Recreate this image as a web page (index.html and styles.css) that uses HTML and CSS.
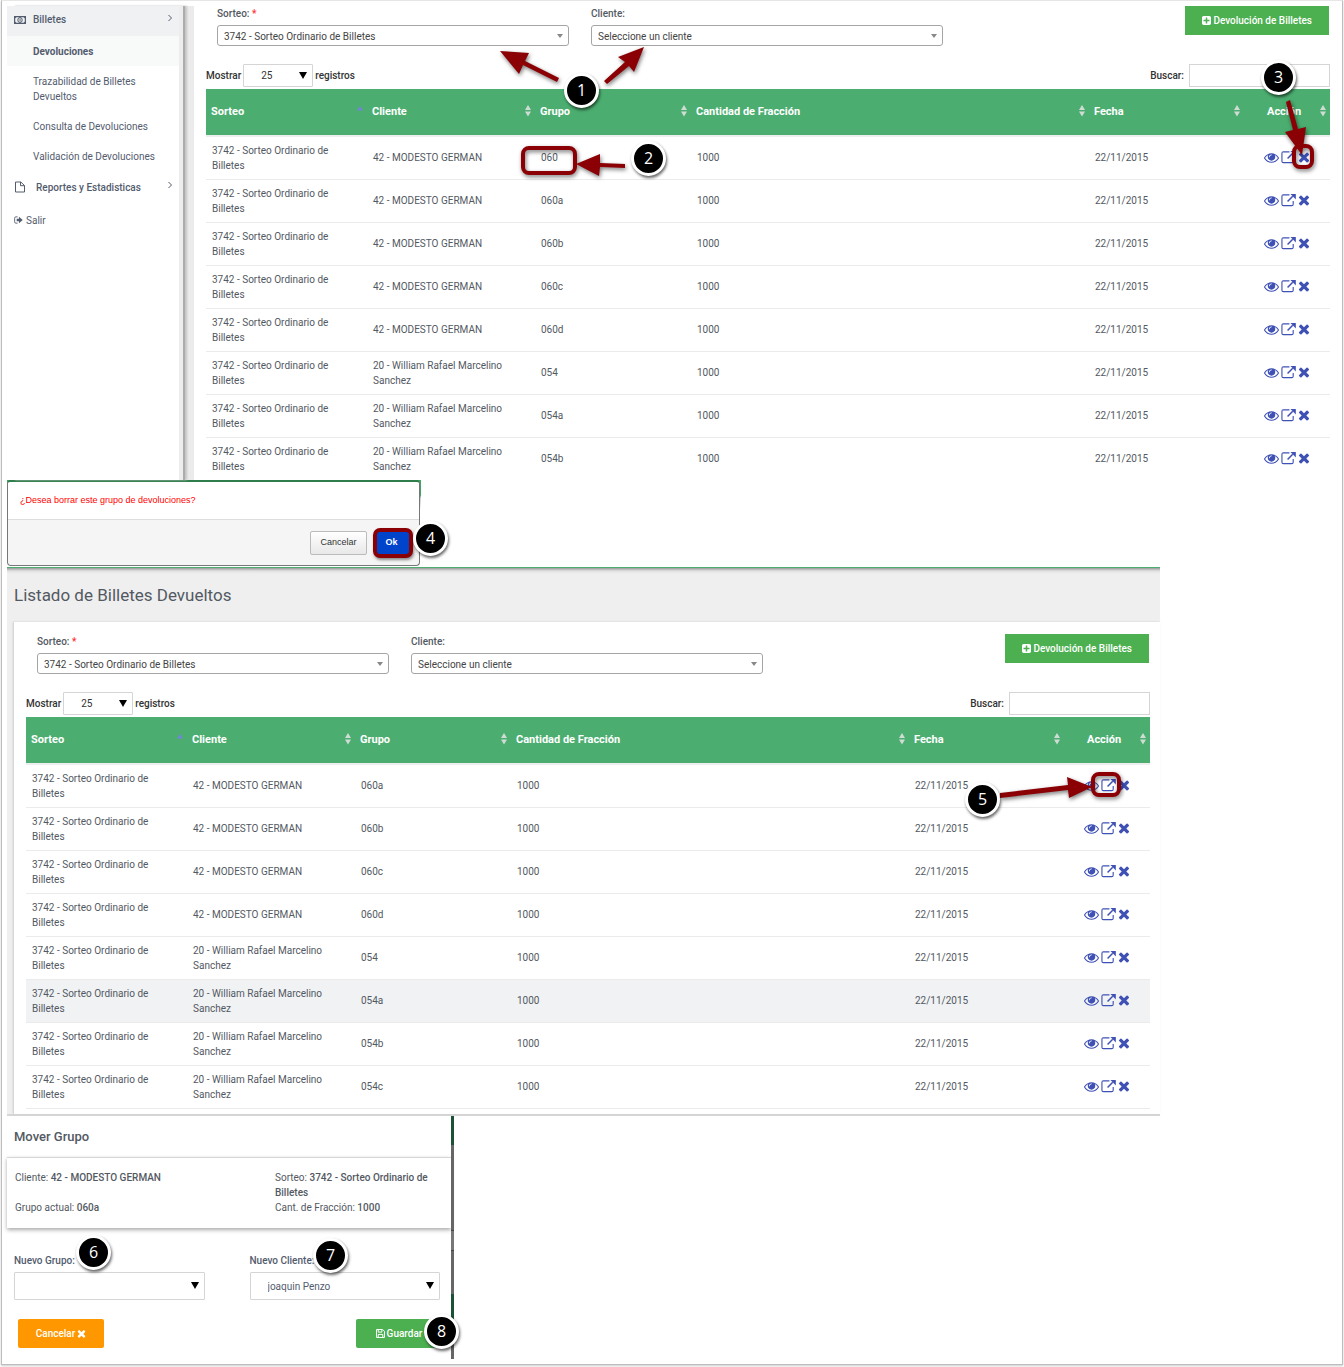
FILE: index.html
```html
<!DOCTYPE html>
<html lang="es">
<head>
<meta charset="utf-8">
<meta name="viewport" content="width=device-width, initial-scale=1">
<title>Listado de Billetes Devueltos</title>
<link rel="stylesheet" href="styles.css">
</head>
<body>
<svg class="symbols" aria-hidden="true">
  <symbol id="eye" viewBox="0 0 1792 1792"><path d="M1664 960q-152-236-381-353q61 104 61 225q0 185-131.5 316.5t-316.5 131.5t-316.5-131.5t-131.5-316.5q0-121 61-225q-229 117-381 353q133 205 333.5 326.5t434.5 121.5t434.5-121.5t333.5-326.5zM944 576q0-20-14-34t-34-14q-125 0-214.5 89.5t-89.5 214.5q0 20 14 34t34 14t34-14t14-34q0-86 61-147t147-61q20 0 34-14t14-34zM1792 960q0 34-20 69q-140 230-376.5 368.5t-499.5 138.5t-499.5-139t-376.5-368q-20-35-20-69t20-69q140-229 376.5-368t499.5-139t499.5 139t376.5 368q20 35 20 69z"/></symbol>
  <symbol id="move" viewBox="0 0 16 16"><path d="M9 2H2.500Q1 2 1 3.500V12Q1 13.500 2.500 13.500H11.500Q13 13.500 13 12V8.500" fill="none" stroke="currentColor" stroke-width="1.200"/><path d="M7 9L12.500 3.500" stroke="currentColor" stroke-width="1.600"/><path d="M10 1H15.800V6.800L13.800 4.800L12 3Z"/></symbol>
  <symbol id="times" viewBox="192 192 1408 1408"><path d="M1490 1322q0 40-28 68l-136 136q-28 28-68 28t-68-28l-294-294-294 294q-28 28-68 28t-68-28l-136-136q-28-28-28-68t28-68l294-294-294-294q-28-28-28-68t28-68l136-136q28-28 68-28t68 28l294 294 294-294q28-28 68-28t68 28l136 136q28 28 28 68t-28 68l-294 294 294 294q28 28 28 68z"/></symbol>
  <symbol id="plus" viewBox="128 128 1536 1536"><path d="M1408 960v-128q0-26-19-45t-45-19h-320v-320q0-26-19-45t-45-19h-128q-26 0-45 19t-19 45v320h-320q-26 0-45 19t-19 45v128q0 26 19 45t45 19h320v320q0 26 19 45t45 19h128q26 0 45-19t19-45v-320h320q26 0 45-19t19-45zm256-544v960q0 119-84.500 203.500t-203.500 84.500h-960q-119 0-203.500-84.500t-84.500-203.500v-960q0-119 84.500-203.500t203.500-84.500h960q119 0 203.500 84.500t84.500 203.500z"/></symbol>
  <symbol id="money" viewBox="0 0 12 10"><path d="M.6 1.600H11.400V8.400H.6Z" fill="none" stroke="currentColor" stroke-width="1.200"/><ellipse cx="6" cy="5" rx="2.200" ry="2.500" fill="none" stroke="currentColor"/><path d="M5.600 3.500h.9v3h-.9zM1 2h1.500L1 3.500zM11 2v1.500L9.500 2zM1 8V6.500L2.500 8zM11 8H9.500L11 6.500z"/></symbol>
  <symbol id="file" viewBox="0 0 12 12"><path d="M1.500 1H6.800L10.500 4.500V11H1.500ZM6.500 1V4.700H10.500" fill="none" stroke="currentColor"/></symbol>
  <symbol id="exit" viewBox="0 0 10 10"><path d="M4 1.500H2Q.7 1.500 .7 3V7Q.7 8.500 2 8.500H4" fill="none" stroke="currentColor"/><path d="M3 3.600H5.500V1.500L9.700 5L5.500 8.500V6.400H3Z"/></symbol>
  <symbol id="angle" viewBox="0 0 8 8"><path d="M2.500 1L5.500 4L2.500 7" fill="none" stroke="currentColor"/></symbol>
  <symbol id="save" viewBox="0 0 10 10"><path d="M.6 .6H7.400L9.400 2.600V9.400H.6ZM2.500 9V6H7.500V9M2.500 1V3.500H6.500V1" fill="none" stroke="currentColor" stroke-width="1.100"/></symbol>
  <symbol id="sort" viewBox="0 0 6 12"><path d="M3 0L6 5H0ZM0 6.500H6L3 11.500Z"/></symbol>
  <symbol id="sorted" viewBox="0 0 6 12"><path d="M3 1L6 5.500H0Z"/></symbol>
</svg>

<main class="sheet">
  <section class="screen">
    <nav class="sidebar">
      <a class="menu open" href="#"><svg class="menu-icon"><use href="#money"/></svg><span>Billetes</span><svg class="angle"><use href="#angle"/></svg></a>
      <a class="sub current" href="#">Devoluciones</a>
      <a class="sub" href="#">Trazabilidad de Billetes Devueltos</a>
      <a class="sub" href="#">Consulta de Devoluciones</a>
      <a class="sub" href="#">Validación de Devoluciones</a>
      <a class="menu reports" href="#"><svg class="menu-icon"><use href="#file"/></svg><span>Reportes y Estadisticas</span><svg class="angle"><use href="#angle"/></svg></a>
      <a class="menu exit" href="#"><svg class="exit-icon"><use href="#exit"/></svg><span>Salir</span></a>
    </nav>
    <div class="card">
      <div class="toolbar">
        <div class="filter"><label for="sorteo1">Sorteo: <b class="required">*</b></label><div class="pick chosen"><select id="sorteo1"><option>3742 - Sorteo Ordinario de Billetes</option></select></div></div>
        <div class="filter"><label for="cliente1">Cliente:</label><div class="pick chosen"><select id="cliente1"><option>Seleccione un cliente</option></select></div></div>
        <button class="btn green add" type="button"><svg><use href="#plus"/></svg>Devolución de Billetes</button>
      </div>
      <div class="controls">
        <label for="len1">Mostrar</label><div class="pick length"><select id="len1"><option>25</option></select></div><span>registros</span>
        <label class="search-label" for="q1">Buscar:</label><input class="search" id="q1" type="search">
      </div>
      <table class="grid">
        <colgroup><col class="c-sorteo"><col class="c-cliente"><col class="c-grupo"><col><col class="c-fecha"><col class="c-accion"></colgroup>
        <thead><tr><th><div>Sorteo<svg class="asc"><use href="#sorted"/></svg></div></th><th><div>Cliente<svg><use href="#sort"/></svg></div></th><th><div>Grupo<svg><use href="#sort"/></svg></div></th><th><div>Cantidad de Fracción<svg><use href="#sort"/></svg></div></th><th><div>Fecha<svg><use href="#sort"/></svg></div></th><th class="act"><div>Acción<svg><use href="#sort"/></svg></div></th></tr></thead>
        <tbody>
          <tr><td>3742 - Sorteo Ordinario de Billetes</td><td>42 - MODESTO GERMAN</td><td>060</td><td>1000</td><td>22/11/2015</td><td><div class="actions"><a href="#" aria-label="Ver"><svg><use href="#eye"/></svg></a><a href="#" aria-label="Mover"><svg><use href="#move"/></svg></a><a class="del" href="#" aria-label="Borrar"><svg><use href="#times"/></svg></a></div></td></tr>
          <tr><td>3742 - Sorteo Ordinario de Billetes</td><td>42 - MODESTO GERMAN</td><td>060a</td><td>1000</td><td>22/11/2015</td><td><div class="actions"><a href="#" aria-label="Ver"><svg><use href="#eye"/></svg></a><a href="#" aria-label="Mover"><svg><use href="#move"/></svg></a><a class="del" href="#" aria-label="Borrar"><svg><use href="#times"/></svg></a></div></td></tr>
          <tr><td>3742 - Sorteo Ordinario de Billetes</td><td>42 - MODESTO GERMAN</td><td>060b</td><td>1000</td><td>22/11/2015</td><td><div class="actions"><a href="#" aria-label="Ver"><svg><use href="#eye"/></svg></a><a href="#" aria-label="Mover"><svg><use href="#move"/></svg></a><a class="del" href="#" aria-label="Borrar"><svg><use href="#times"/></svg></a></div></td></tr>
          <tr><td>3742 - Sorteo Ordinario de Billetes</td><td>42 - MODESTO GERMAN</td><td>060c</td><td>1000</td><td>22/11/2015</td><td><div class="actions"><a href="#" aria-label="Ver"><svg><use href="#eye"/></svg></a><a href="#" aria-label="Mover"><svg><use href="#move"/></svg></a><a class="del" href="#" aria-label="Borrar"><svg><use href="#times"/></svg></a></div></td></tr>
          <tr><td>3742 - Sorteo Ordinario de Billetes</td><td>42 - MODESTO GERMAN</td><td>060d</td><td>1000</td><td>22/11/2015</td><td><div class="actions"><a href="#" aria-label="Ver"><svg><use href="#eye"/></svg></a><a href="#" aria-label="Mover"><svg><use href="#move"/></svg></a><a class="del" href="#" aria-label="Borrar"><svg><use href="#times"/></svg></a></div></td></tr>
          <tr><td>3742 - Sorteo Ordinario de Billetes</td><td>20 - William Rafael Marcelino Sanchez</td><td>054</td><td>1000</td><td>22/11/2015</td><td><div class="actions"><a href="#" aria-label="Ver"><svg><use href="#eye"/></svg></a><a href="#" aria-label="Mover"><svg><use href="#move"/></svg></a><a class="del" href="#" aria-label="Borrar"><svg><use href="#times"/></svg></a></div></td></tr>
          <tr><td>3742 - Sorteo Ordinario de Billetes</td><td>20 - William Rafael Marcelino Sanchez</td><td>054a</td><td>1000</td><td>22/11/2015</td><td><div class="actions"><a href="#" aria-label="Ver"><svg><use href="#eye"/></svg></a><a href="#" aria-label="Mover"><svg><use href="#move"/></svg></a><a class="del" href="#" aria-label="Borrar"><svg><use href="#times"/></svg></a></div></td></tr>
          <tr><td>3742 - Sorteo Ordinario de Billetes</td><td>20 - William Rafael Marcelino Sanchez</td><td>054b</td><td>1000</td><td>22/11/2015</td><td><div class="actions"><a href="#" aria-label="Ver"><svg><use href="#eye"/></svg></a><a href="#" aria-label="Mover"><svg><use href="#move"/></svg></a><a class="del" href="#" aria-label="Borrar"><svg><use href="#times"/></svg></a></div></td></tr>
        </tbody>
      </table>
    </div>
    <svg class="marks marks-filters" viewBox="490 40 180 145" aria-hidden="true">
      <path class="arrow" d="M500 51L529 53L525 61L559 78L557 82L523 65L519 74ZM644 47L634 72L629 66L607 84L604 81L625 62L618 57ZM576 164L600 154V163L625 164V168L600 167L599 176Z"/>
      <rect class="ring" x="523" y="148" width="52" height="25" rx="6"/>
    </svg>
    <svg class="marks marks-delete" viewBox="1270 90 60 90" aria-hidden="true">
      <rect class="ring" x="1295" y="146" width="18" height="21" rx="6"/>
      <path class="arrow" d="M1303 155L1286 132L1294 130L1287 102L1291 100L1299 129L1307 127Z"/>
    </svg>
    <span class="badge b1">1</span><span class="badge b2">2</span><span class="badge b3">3</span>
  </section>

  <section class="confirm-wrap">
    <div class="confirm" role="dialog" aria-label="Confirmar">
      <p>¿Desea borrar este grupo de devoluciones?</p>
      <div class="confirm-foot">
        <button class="plain" type="button">Cancelar</button>
        <button class="ok" type="button">Ok</button>
      </div>
    </div>
    <span class="badge b4">4</span>
  </section>

  <section class="listing">
    <h1>Listado de Billetes Devueltos</h1>
    <div class="card">
      <div class="toolbar">
        <div class="filter"><label for="sorteo2">Sorteo: <b class="required">*</b></label><div class="pick chosen"><select id="sorteo2"><option>3742 - Sorteo Ordinario de Billetes</option></select></div></div>
        <div class="filter"><label for="cliente2">Cliente:</label><div class="pick chosen"><select id="cliente2"><option>Seleccione un cliente</option></select></div></div>
        <button class="btn green add" type="button"><svg><use href="#plus"/></svg>Devolución de Billetes</button>
      </div>
      <div class="controls">
        <label for="len2">Mostrar</label><div class="pick length"><select id="len2"><option>25</option></select></div><span>registros</span>
        <label class="search-label" for="q2">Buscar:</label><input class="search" id="q2" type="search">
      </div>
      <table class="grid">
        <colgroup><col class="c-sorteo"><col class="c-cliente"><col class="c-grupo"><col><col class="c-fecha"><col class="c-accion"></colgroup>
        <thead><tr><th><div>Sorteo<svg class="asc"><use href="#sorted"/></svg></div></th><th><div>Cliente<svg><use href="#sort"/></svg></div></th><th><div>Grupo<svg><use href="#sort"/></svg></div></th><th><div>Cantidad de Fracción<svg><use href="#sort"/></svg></div></th><th><div>Fecha<svg><use href="#sort"/></svg></div></th><th class="act"><div>Acción<svg><use href="#sort"/></svg></div></th></tr></thead>
        <tbody>
          <tr><td>3742 - Sorteo Ordinario de Billetes</td><td>42 - MODESTO GERMAN</td><td>060a</td><td>1000</td><td>22/11/2015</td><td><div class="actions"><a href="#" aria-label="Ver"><svg><use href="#eye"/></svg></a><a href="#" aria-label="Mover"><svg><use href="#move"/></svg></a><a class="del" href="#" aria-label="Borrar"><svg><use href="#times"/></svg></a></div></td></tr>
          <tr><td>3742 - Sorteo Ordinario de Billetes</td><td>42 - MODESTO GERMAN</td><td>060b</td><td>1000</td><td>22/11/2015</td><td><div class="actions"><a href="#" aria-label="Ver"><svg><use href="#eye"/></svg></a><a href="#" aria-label="Mover"><svg><use href="#move"/></svg></a><a class="del" href="#" aria-label="Borrar"><svg><use href="#times"/></svg></a></div></td></tr>
          <tr><td>3742 - Sorteo Ordinario de Billetes</td><td>42 - MODESTO GERMAN</td><td>060c</td><td>1000</td><td>22/11/2015</td><td><div class="actions"><a href="#" aria-label="Ver"><svg><use href="#eye"/></svg></a><a href="#" aria-label="Mover"><svg><use href="#move"/></svg></a><a class="del" href="#" aria-label="Borrar"><svg><use href="#times"/></svg></a></div></td></tr>
          <tr><td>3742 - Sorteo Ordinario de Billetes</td><td>42 - MODESTO GERMAN</td><td>060d</td><td>1000</td><td>22/11/2015</td><td><div class="actions"><a href="#" aria-label="Ver"><svg><use href="#eye"/></svg></a><a href="#" aria-label="Mover"><svg><use href="#move"/></svg></a><a class="del" href="#" aria-label="Borrar"><svg><use href="#times"/></svg></a></div></td></tr>
          <tr><td>3742 - Sorteo Ordinario de Billetes</td><td>20 - William Rafael Marcelino Sanchez</td><td>054</td><td>1000</td><td>22/11/2015</td><td><div class="actions"><a href="#" aria-label="Ver"><svg><use href="#eye"/></svg></a><a href="#" aria-label="Mover"><svg><use href="#move"/></svg></a><a class="del" href="#" aria-label="Borrar"><svg><use href="#times"/></svg></a></div></td></tr>
          <tr class="hovered"><td>3742 - Sorteo Ordinario de Billetes</td><td>20 - William Rafael Marcelino Sanchez</td><td>054a</td><td>1000</td><td>22/11/2015</td><td><div class="actions"><a href="#" aria-label="Ver"><svg><use href="#eye"/></svg></a><a href="#" aria-label="Mover"><svg><use href="#move"/></svg></a><a class="del" href="#" aria-label="Borrar"><svg><use href="#times"/></svg></a></div></td></tr>
          <tr><td>3742 - Sorteo Ordinario de Billetes</td><td>20 - William Rafael Marcelino Sanchez</td><td>054b</td><td>1000</td><td>22/11/2015</td><td><div class="actions"><a href="#" aria-label="Ver"><svg><use href="#eye"/></svg></a><a href="#" aria-label="Mover"><svg><use href="#move"/></svg></a><a class="del" href="#" aria-label="Borrar"><svg><use href="#times"/></svg></a></div></td></tr>
          <tr><td>3742 - Sorteo Ordinario de Billetes</td><td>20 - William Rafael Marcelino Sanchez</td><td>054c</td><td>1000</td><td>22/11/2015</td><td><div class="actions"><a href="#" aria-label="Ver"><svg><use href="#eye"/></svg></a><a href="#" aria-label="Mover"><svg><use href="#move"/></svg></a><a class="del" href="#" aria-label="Borrar"><svg><use href="#times"/></svg></a></div></td></tr>
        </tbody>
      </table>
    </div>
    <svg class="marks marks-move" viewBox="990 765 140 45" aria-hidden="true">
      <rect class="ring" x="1093" y="774" width="26" height="21" rx="6"/>
      <path class="arrow" d="M1092 787L1069 798L1068 790L1000 798V793L1068 785L1067 777Z"/>
    </svg>
    <span class="badge b5">5</span>
  </section>

  <section class="mover-wrap">
    <form class="mover">
      <h2>Mover Grupo</h2>
      <div class="details">
        <p>Cliente: <b>42 - MODESTO GERMAN</b></p>
        <p>Sorteo: <b>3742 - Sorteo Ordinario de Billetes</b></p>
        <p>Grupo actual: <b>060a</b></p>
        <p>Cant. de Fracción: <b>1000</b></p>
      </div>
      <div class="fields">
        <div class="field"><label for="ngrupo">Nuevo Grupo:</label><div class="pick tall"><select id="ngrupo"><option></option></select></div></div>
        <div class="field"><label for="ncliente">Nuevo Cliente:</label><div class="pick tall"><select id="ncliente"><option>joaquin Penzo</option></select></div></div>
      </div>
      <div class="buttons">
        <button class="btn orange" type="button">Cancelar<svg><use href="#times"/></svg></button>
        <button class="btn green" type="button"><svg><use href="#save"/></svg>Guardar</button>
      </div>
    </form>
    <div class="backdrop"></div>
    <span class="badge b6">6</span><span class="badge b7">7</span><span class="badge b8">8</span>
  </section>
</main>
</body>
</html>
```

FILE: styles.css
```css
* { box-sizing: border-box; }
body {
  margin: 0;
  background: #fff;
  color: #535962;
  font: 10px/15px Roboto, "Liberation Sans", sans-serif;
}
a { color: inherit; text-decoration: none; }
p, h1, h2 { margin: 0; }
b { font-weight: 500; }
svg { display: block; fill: currentColor; flex: none; }
button, select, input { font: inherit; color: inherit; margin: 0; }
.symbols { position: absolute; width: 0; height: 0; }

.sheet {
  margin: 0 1px 2px;
  padding: 5px;
  border: 1px solid #bdbdbd;
  border-top-color: #e6e6e6;
  box-shadow: 0 1px 2px #ccc;
}

/* Upper screen: menu and list */
.screen { position: relative; display: flex; }
.sidebar {
  flex: none;
  width: 172px;
  color: #535c6e;
}
.sidebar a { display: flex; }
.sidebar .sub { padding: 8px 20px 7px 26px; }
.sidebar .current { background: #f8f9f9; font-weight: 700; }
.sidebar .menu { padding: 8px 5px 8px 7px; height: 32px; align-items: center; font-weight: 500; }
.sidebar .open { height: 30px; padding: 6px 5px 9px 7px; background: #eff1f2; }
.menu-icon { width: 12px; height: 12px; }
.sidebar .menu span { margin-left: 7px; }
.sidebar .reports span { margin-left: 10px; }
.sidebar .exit { height: 34px; font-weight: 400; }
.sidebar .exit span { margin-left: 3px; }
.exit-icon { width: 9px; height: 10px; }
.angle { width: 8px; height: 8px; margin: 0 0 4px auto; }
.screen .card {
  margin-left: 15px;
  padding: 0 7px 0 12px;
  box-shadow: -15px 0 #ebebeb;
  border: 0;
}
.sidebar { box-shadow: 4px 0 #ededed, 6px 0 #acacac, 8px 0 2px #c4c4c4; z-index: 1; }

.card { flex: 1; min-width: 0; background: #fff; }
.toolbar { display: flex; align-items: flex-start; gap: 22px; padding-left: 11px; }
.filter { flex: 0 1 352px; min-width: 0; }
.filter label { display: block; height: 19px; font-weight: 500; }
.required { color: #f33; }

.pick { position: relative; display: block; }
.pick select {
  display: block;
  width: 100%;
  height: 100%;
  padding: 0 20px 0 17px;
  border: 1px solid #d5d5d5;
  border-radius: 1px;
  background: #fff;
  appearance: none;
}
.pick::after {
  content: "";
  position: absolute;
  right: 6px;
  top: calc(50% - 4px);
  border: 4px solid transparent;
  border-top: 7px solid #000;
  border-bottom: 0;
}
.chosen { height: 21px; }
.chosen select { padding: 2px 20px 0 6px; border-color: #a5a5a5; border-radius: 3px; color: #444; }
.chosen::after { top: 9px; border-width: 4px 3px 0; border-top-color: #888; }

.controls {
  display: flex;
  align-items: center;
  gap: 2px;
  margin: 18px 0 2px;
  color: #333;
  font-weight: 500;
}
.length { width: 70px; height: 23px; font-weight: 400; }
.search-label { margin-left: auto; margin-right: 3px; }
.search { width: 141px; height: 23px; border: 1px solid #d5d5d5; background: #fff; appearance: none; }

.btn {
  display: flex;
  align-items: center;
  justify-content: center;
  gap: 2px;
  height: 29px;
  padding: 0 17px;
  border: 0;
  color: #fff;
  font-weight: 500;
}
.add { margin-left: auto; margin-right: 1px; }
.btn svg { width: 9px; height: 9px; }
.green { background: #4caf50; }
.orange { background: #ff9800; }

.grid { width: 100%; table-layout: fixed; border-spacing: 0; }
.c-sorteo { width: 161px; }
.c-cliente { width: 168px; }
.c-grupo { width: 156px; }
.c-fecha { width: 155px; }
.c-accion { width: 86px; }
.grid th {
  height: 48px;
  padding: 0 4px 2px 5px;
  border-bottom: 2px solid #eee;
  background: #4bae70;
  color: #fff;
  font-size: 11px;
  font-weight: 700;
  text-align: left;
}
.grid th div { display: flex; align-items: center; justify-content: space-between; height: 44px; }
.grid th svg { width: 6px; height: 12px; color: #cfdcd4; }
.grid th .asc { color: #7484d6; }
.grid .act { padding-left: 23px; }
.grid td {
  height: 43px;
  padding: 0 22px 1px 6px;
  border-bottom: 1px solid #ebebeb;
}
.grid td:last-child { padding: 0 1px 2px 0; }
.screen tr:last-child td { height: 42px; border-bottom: 0; }
.hovered td { background: #f0f2f4; }
.actions { display: flex; align-items: center; justify-content: center; gap: 2px; color: #3f51b5; }
.actions svg { width: 15px; height: 15px; }
.actions .del svg { width: 12px; height: 12px; }

/* Confirmation dialog */
.confirm-wrap { position: relative; max-width: 414px; height: 87px; background: linear-gradient(#3fa562 15px, #ccc 18px, #fff 30px); }
.confirm {
  width: calc(100% - 1px);
  overflow: hidden;
  border: 1px solid #777;
  border-top: 2px solid #2e7d4b;
  border-radius: 4px;
  background: #f5f5f5;
  font-family: "Liberation Sans", sans-serif;
  font-size: 9px;
}
.confirm p { padding: 11px 12px; background: #fff; border-bottom: 1px solid #ddd; color: #f00; }
.confirm-foot { display: flex; align-items: center; justify-content: flex-end; gap: 6px; height: 45px; padding-right: 6px; }
.plain { width: 57px; height: 24px; padding: 0; border: 1px solid #bbb; border-radius: 2px; background: linear-gradient(#fff, #e8e8e8); color: #333; }
.ok {
  width: 40px;
  height: 30px;
  padding: 0 3px 0 0;
  border: 4px solid #8b0005;
  border-radius: 7px;
  background: #04c;
  color: #fff;
  font-weight: 700;
  box-shadow: 1px 2px 3px #888;
}

/* Lower screen: list page */
.listing {
  position: relative;
  max-width: 1153px;
  padding-left: 7px;
  border-top: 1px solid #4bae70;
  border-bottom: 2px solid #d6d6d6;
  background: linear-gradient(#999, #e2e2e2 3px, #efefef 6px);
}
.listing h1 { padding: 17px 0; font-size: 17px; line-height: 20px; font-weight: 400; }
.listing .card { padding: 12px 10px 5px 12px; box-shadow: -1px 0 2px #ccc; }

/* Move form */
.mover-wrap { position: relative; display: flex; max-width: 447px; }
.mover { flex: 1; min-width: 0; padding-bottom: 11px; }
.mover h2 { padding: 13px 7px; font-size: 13px; line-height: 15px; font-weight: 500; }
.details {
  display: grid;
  grid-template-columns: 260px 1fr;
  padding: 12px 14px 13px 8px;
  border-top: 1px solid #d6d6d6;
  box-shadow: 0 2px 4px #aaa;
}
.fields { display: flex; gap: 45px; padding: 25px 11px 19px 7px; }
.field { flex: 1; min-width: 0; color: #535c6e; }
.field label { display: block; height: 19px; font-weight: 500; }
.tall { height: 28px; }
.buttons { display: flex; justify-content: space-between; padding: 0 9px 0 11px; }
.buttons .btn { border-radius: 2px; min-width: 86px; }
.backdrop { width: 3px; background: linear-gradient(#1b5136 29px, #666 29px 114px, #444 114px 115px, #777 115px 134px, #444 134px 135px, #666 135px 178px, #1b5136 178px 204px, #666 204px); }

/* Tutorial annotations laid over the screens */
.marks { position: absolute; z-index: 2; overflow: visible; filter: drop-shadow(1px 2px 2px #0008); }
.arrow { fill: #8b0005; }
.ring { fill: none; stroke: #8b0005; stroke-width: 4; }
.marks-filters { left: 483px; top: 34px; width: 180px; height: 145px; }
.marks-delete { right: 8px; top: 84px; width: 60px; height: 90px; }
.marks-move { right: 30px; top: 197px; width: 140px; height: 45px; }
.badge {
  position: absolute;
  z-index: 3;
  width: 35px;
  height: 35px;
  border: 3px solid #fff;
  border-radius: 50%;
  background: #000;
  color: #fff;
  font: 16px/29px "Open Sans", sans-serif;
  text-align: center;
  box-shadow: 1px 2px 3px #0009;
}
.b1 { left: 557px; top: 67px; }
.b2 { left: 624px; top: 135px; }
.b3 { right: 41px; top: 54px; }
.b4 { right: -27px; top: 41px; }
.b5 { right: 160px; top: 214px; }
.b6 { left: 69px; top: 119px; }
.b7 { left: 306px; top: 122px; }
.b8 { right: -5px; top: 198px; }
```
